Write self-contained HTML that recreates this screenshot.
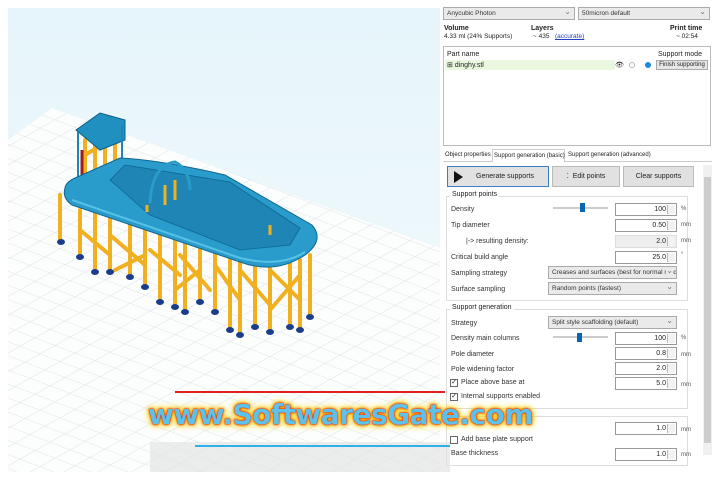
<!DOCTYPE html>
<html><head><meta charset="utf-8"><style>
*{margin:0;padding:0;box-sizing:border-box;white-space:nowrap}
body{width:720px;height:480px;background:#fff;position:relative;overflow:hidden;font-family:"Liberation Sans",sans-serif;font-size:7px;color:#222}
.a{position:absolute}
.dd{position:absolute;height:13px;border:1px solid #aaa;background:#eaeaea;font-size:6.5px;line-height:11px;padding-left:3px;color:#333;overflow:hidden}
.dd:after{content:"⌄";position:absolute;right:3px;top:-2px;color:#777;font-size:8px;background:#eaeaea}
.inp{position:absolute;left:615px;width:62px;height:13px;border:1px solid #999;background:#fff;text-align:right;padding-right:10px;font-size:7px;line-height:11px}
.inp:after{content:"";position:absolute;right:1px;top:1px;width:7px;height:9px;border-left:1px solid #bbb;background:#f2f2f2}
.u{position:absolute;left:681px;font-size:6px;color:#555}
.lb{position:absolute;left:451px;font-size:7px;color:#333}
.btn{position:absolute;top:166px;height:21px;border:1px solid #bbb;background:#e1e1e1;font-size:7px;line-height:19px;text-align:center}
.grp{position:absolute;left:446px;width:242px;border:1px solid #ddd}
.cb{position:absolute;left:450px;width:8px;height:8px;border:1px solid #666;background:#fff;font-size:7px;line-height:6px;text-align:center}
.sl{position:absolute;left:553px;width:55px;height:2px;background:#ccc}
.th{position:absolute;width:5px;height:9px;background:#0a64b4}
</style></head><body>
<svg class="a" style="left:0;top:0" width="442" height="480" viewBox="0 0 442 480">
<defs>
<linearGradient id="bg" x1="0" y1="0" x2="0" y2="1"><stop offset="0" stop-color="#e6f5fb"/><stop offset="0.6" stop-color="#eef8fb"/><stop offset="1" stop-color="#f7fbfc"/></linearGradient>
<pattern id="gr" width="20" height="20" patternUnits="userSpaceOnUse" patternTransform="matrix(1,0.38,-0.75,0.42,0,0)"><rect width="20" height="20" fill="#fcfdfd"/><path d="M0 0H20M0 0V20" stroke="#d8dde1" stroke-width="1" fill="none"/></pattern>
<clipPath id="pl"><polygon points="8,140 52,108 440,248 440,472 8,472"/></clipPath>
</defs>
<rect x="8" y="8" width="432" height="464" fill="url(#bg)"/>
<rect x="0" y="0" width="442" height="480" fill="url(#gr)" clip-path="url(#pl)"/>
<g stroke="#f0b020" stroke-width="4" stroke-linecap="round">
<path d="M60 195V240M80 210V255M95 210V270M110 215V270M130 225V275M145 230V285M160 235V300M175 240V305M185 240V310M200 245V300M215 250V310M230 250V330M240 255V335M255 260V325M270 265V330M290 262V325M300 260V330M310 255V315"/>
<path d="M80 230L110 255M110 235L145 265M150 250L180 275M180 255L210 290M215 265L240 300M240 270L270 305M270 270L300 300M300 275L270 310M145 255L115 270M200 270L175 290"/>
<path d="M85 140V180M95 130V175M105 135V175M115 130V170M85 155L110 140"/>
</g>
<g fill="#1a3e8c">
<ellipse cx="61" cy="242" rx="4" ry="3"/><ellipse cx="80" cy="257" rx="4" ry="3"/><ellipse cx="95" cy="272" rx="4" ry="3"/><ellipse cx="110" cy="272" rx="4" ry="3"/><ellipse cx="130" cy="277" rx="4" ry="3"/><ellipse cx="145" cy="287" rx="4" ry="3"/><ellipse cx="160" cy="302" rx="4" ry="3"/><ellipse cx="175" cy="307" rx="4" ry="3"/><ellipse cx="185" cy="312" rx="4" ry="3"/><ellipse cx="200" cy="302" rx="4" ry="3"/><ellipse cx="215" cy="312" rx="4" ry="3"/><ellipse cx="230" cy="330" rx="4" ry="3"/><ellipse cx="240" cy="335" rx="4" ry="3"/><ellipse cx="255" cy="327" rx="4" ry="3"/><ellipse cx="270" cy="332" rx="4" ry="3"/><ellipse cx="290" cy="327" rx="4" ry="3"/><ellipse cx="300" cy="330" rx="4" ry="3"/><ellipse cx="310" cy="317" rx="4" ry="3"/>
</g>
<path d="M76 130L100 113L125 120V140L100 150Z" fill="#2090c0" stroke="#0d5f88" stroke-width="1"/>
<path d="M78 132V185M122 125V170" stroke="#1d84b5" stroke-width="2"/>
<g stroke="#a01c1c" stroke-width="3"><path d="M82 150V175M108 175V195M160 200V225M170 205V220"/></g>
<path d="M65 188Q62 198 72 205L240 262Q275 275 305 255Q325 240 312 225L225 175Q160 160 120 158L75 178Q66 182 65 188Z" fill="#2a9ccb" stroke="#0e6690" stroke-width="1"/>
<path d="M110 180L125 165L230 182L300 228L290 245L240 250L150 215Z" fill="#1e85b4" stroke="#0e6690" stroke-width="0.8"/>
<path d="M72 200L240 258Q280 268 305 252" stroke="#56c2e6" stroke-width="2" fill="none"/>
<path d="M150 203Q152 165 175 162Q190 170 190 190" stroke="#2a9ccb" stroke-width="3" fill="none"/>
<g stroke="#f0b020" stroke-width="3"><path d="M165 185V205M175 180V200M147 205V212M270 225V235"/></g>
</svg>
<div class="dd" style="left:443px;top:7px;width:132px">Anycubic Photon</div>
<div class="dd" style="left:578px;top:7px;width:132px">50micron default</div>
<div class="a" style="left:444px;top:25px;font-weight:bold;font-size:7px">Volume</div>
<div class="a" style="left:444px;top:33px;font-size:6.5px">4.33 ml (24% Supports)</div>
<div class="a" style="left:531px;top:25px;font-weight:bold">Layers</div>
<div class="a" style="left:533px;top:33px;font-size:6.5px">~ 435</div>
<div class="a" style="left:555px;top:33px;font-size:6.5px;color:#2040c0;text-decoration:underline">(accurate)</div>
<div class="a" style="left:670px;top:25px;font-weight:bold">Print time</div>
<div class="a" style="left:676px;top:33px;font-size:6.5px">~ 02:54</div>
<div class="a" style="left:443px;top:46px;width:268px;height:100px;border:1px solid #bbb;background:#fff"></div>
<div class="a" style="left:447px;top:51px">Part name</div>
<div class="a" style="left:658px;top:51px">Support mode</div>
<div class="a" style="left:445px;top:60px;width:170px;height:10px;background:#e9f8df"></div>
<div class="a" style="left:447px;top:61px">⊞ dinghy.stl</div>
<div class="a" style="left:615px;top:61px;font-size:7px">👁</div>
<div class="a" style="left:629px;top:62px;width:6px;height:6px;border:1px solid #bbb;border-radius:50%"></div>
<div class="a" style="left:645px;top:62px;width:6px;height:6px;background:#1a8ad8;border-radius:50%"></div>
<div class="a" style="left:656px;top:60px;width:52px;height:10px;border:1px solid #aaa;background:#e6e6e6;font-size:6px;text-align:center;line-height:8px;overflow:hidden">Finish supporting</div>
<div class="a" style="left:443px;top:161px;width:269px;height:1px;background:#ccc"></div>
<div class="a" style="left:445px;top:152px;font-size:6px">Object properties</div>
<div class="a" style="left:492px;top:149px;width:73px;height:13px;border:1px solid #ccc;border-bottom:none;background:#fff;font-size:6px;padding:3px 1px">Support generation (basic)</div>
<div class="a" style="left:568px;top:152px;font-size:6px">Support generation (advanced)</div>
<div class="btn" style="left:447px;width:102px;border:1px solid #3a7fc0;text-align:left;padding-left:28px">Generate supports<span class="a" style="left:6px;top:4px;width:0;height:0;border-left:9px solid #111;border-top:6px solid transparent;border-bottom:6px solid transparent"></span></div>
<div class="btn" style="left:552px;width:68px">⁚ &nbsp;Edit points</div>
<div class="btn" style="left:623px;width:71px">Clear supports</div>
<div class="a" style="left:703px;top:165px;width:9px;height:290px;background:#f0f0f0"></div>
<div class="a" style="left:704px;top:177px;width:7px;height:266px;background:#cdcdcd"></div>
<div class="grp" style="top:196px;height:105px"></div>
<div class="a" style="left:450px;top:191px;background:#fff;padding:0 2px">Support points</div>
<div class="lb" style="top:206px">Density</div><div class="sl" style="top:207px"></div><div class="th" style="left:580px;top:203px"></div>
<div class="inp" style="top:203px">100</div><div class="u" style="top:206px">%</div>
<div class="lb" style="top:222px">Tip diameter</div><div class="inp" style="top:219px">0.50</div><div class="u" style="top:222px">mm</div>
<div class="lb" style="top:238px;left:466px">|-&gt; resulting density:</div><div class="inp" style="top:235px;background:#eee;border-color:#ddd">2.0</div><div class="u" style="top:238px">mm</div>
<div class="lb" style="top:254px">Critical build angle</div><div class="inp" style="top:251px">25.0</div><div class="u" style="top:252px">°</div>
<div class="lb" style="top:270px">Sampling strategy</div><div class="dd" style="left:548px;top:266px;width:129px">Creases and surfaces (best for normal model)</div>
<div class="lb" style="top:286px">Surface sampling</div><div class="dd" style="left:548px;top:282px;width:129px">Random points (fastest)</div>
<div class="grp" style="top:309px;height:100px"></div>
<div class="a" style="left:450px;top:304px;background:#fff;padding:0 2px">Support generation</div>
<div class="lb" style="top:320px">Strategy</div><div class="dd" style="left:548px;top:316px;width:129px">Split style scaffolding (default)</div>
<div class="lb" style="top:335px">Density main columns</div><div class="sl" style="top:336px"></div><div class="th" style="left:577px;top:333px"></div>
<div class="inp" style="top:332px">100</div><div class="u" style="top:335px">%</div>
<div class="lb" style="top:351px">Pole diameter</div><div class="inp" style="top:347px">0.8</div><div class="u" style="top:352px">mm</div>
<div class="lb" style="top:366px">Pole widening factor</div><div class="inp" style="top:362px">2.0</div>
<div class="cb" style="top:379px">✓</div><div class="lb" style="top:379px;left:461px">Place above base at</div><div class="inp" style="top:377px">5.0</div><div class="u" style="top:382px">mm</div>
<div class="cb" style="top:393px">✓</div><div class="lb" style="top:393px;left:461px">Internal supports enabled</div>
<div class="grp" style="top:416px;height:50px"></div>
<div class="inp" style="top:422px">1.0</div><div class="u" style="top:427px">mm</div>
<div class="cb" style="top:436px"></div><div class="lb" style="top:436px;left:461px">Add base plate support</div>
<div class="lb" style="top:450px">Base thickness</div><div class="inp" style="top:448px">1.0</div><div class="u" style="top:452px">mm</div>
<div class="a" style="left:150px;top:442px;width:300px;height:30px;background:#e4e4e4;opacity:.7"></div>
<div class="a" style="left:175px;top:391px;width:270px;height:2px;background:#e02020"></div>
<div class="a" style="left:195px;top:445px;width:255px;height:2px;background:#30b0e8"></div>
<div class="a" style="left:148px;top:398px;font-family:'DejaVu Sans',sans-serif;font-weight:bold;font-size:28px;color:#5cc2ec;letter-spacing:-0.5px;text-shadow:0 0 1px #e01010,0 0 2px #e01010,0 0 3px #ff9000,0 0 5px #ffd000,0 0 7px #ffd000,0 0 9px #ffe040">www.SoftwaresGate.com</div>
</body></html>
